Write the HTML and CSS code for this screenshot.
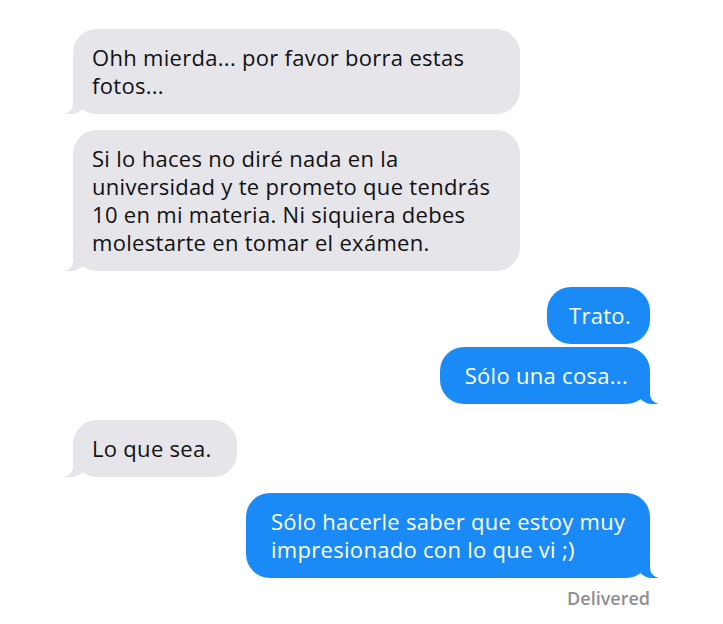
FILE: index.html
```html
<!DOCTYPE html>
<html lang="es">
<head>
  <meta charset="UTF-8" />
  <title>Mensajes</title>
  <link rel="stylesheet" href="styles.css">
</head>
<body>
  <div class="chat">
    <div class="msg received tail">Ohh mierda... por favor borra estas fotos...</div>
    <div class="msg received tail">Si lo haces no diré nada en la universidad y te prometo que tendrás 10 en mi materia. Ni siquiera debes molestarte en tomar el exámen.</div>
    <div class="msg sent grouped">Trato.</div>
    <div class="msg sent tail">Sólo una cosa...</div>
    <div class="msg received tail">Lo que sea.</div>
    <div class="msg sent tail last">Sólo hacerle saber que estoy muy impresionado con lo que vi ;)</div>
    <div class="status">Delivered</div>
  </div>
</body>
</html>
```

FILE: styles.css
```css
body {
  margin: 0;
  background: #fff;
  font-family: 'Open Sans', 'Noto Sans', sans-serif;
}
.chat {
  display: flex;
  flex-direction: column;
  padding: 29px 73px 20px;
}
.msg {
  position: relative;
  font-size: 22px;
  line-height: 28px;
  letter-spacing: 0.3px;
  padding: 14px 25px 15px 19px;
  border-radius: 24px;
  margin-bottom: 16px;
}
.received {
  align-self: flex-start;
  max-width: 403px;
  background: #e5e5ea;
  color: #111;
}
.sent {
  align-self: flex-end;
  max-width: 357px;
  background: #1a8bf6;
  color: #fff;
  padding: 14px 22px 15px 25px;
}
.sent.grouped {
  margin-bottom: 3px;
  padding-left: 22px;
  padding-right: 19px;
}
.sent.last {
  margin-bottom: 8px;
}

/* bubble tails */
.tail::before,
.tail::after {
  content: "";
  position: absolute;
  bottom: 0;
  height: 22px;
}
.received.tail::before {
  left: -8px;
  width: 22px;
  background: #e5e5ea;
  border-bottom-right-radius: 16px;
}
.received.tail::after {
  left: -12px;
  width: 12px;
  background: #fff;
  border-bottom-right-radius: 10px;
}
.sent.tail::before {
  right: -8px;
  width: 22px;
  background: #1a8bf6;
  border-bottom-left-radius: 16px;
}
.sent.tail::after {
  right: -12px;
  width: 12px;
  background: #fff;
  border-bottom-left-radius: 10px;
}
.status {
  align-self: flex-end;
  font-size: 18px;
  font-weight: 600;
  color: #8e8e93;
}
```
